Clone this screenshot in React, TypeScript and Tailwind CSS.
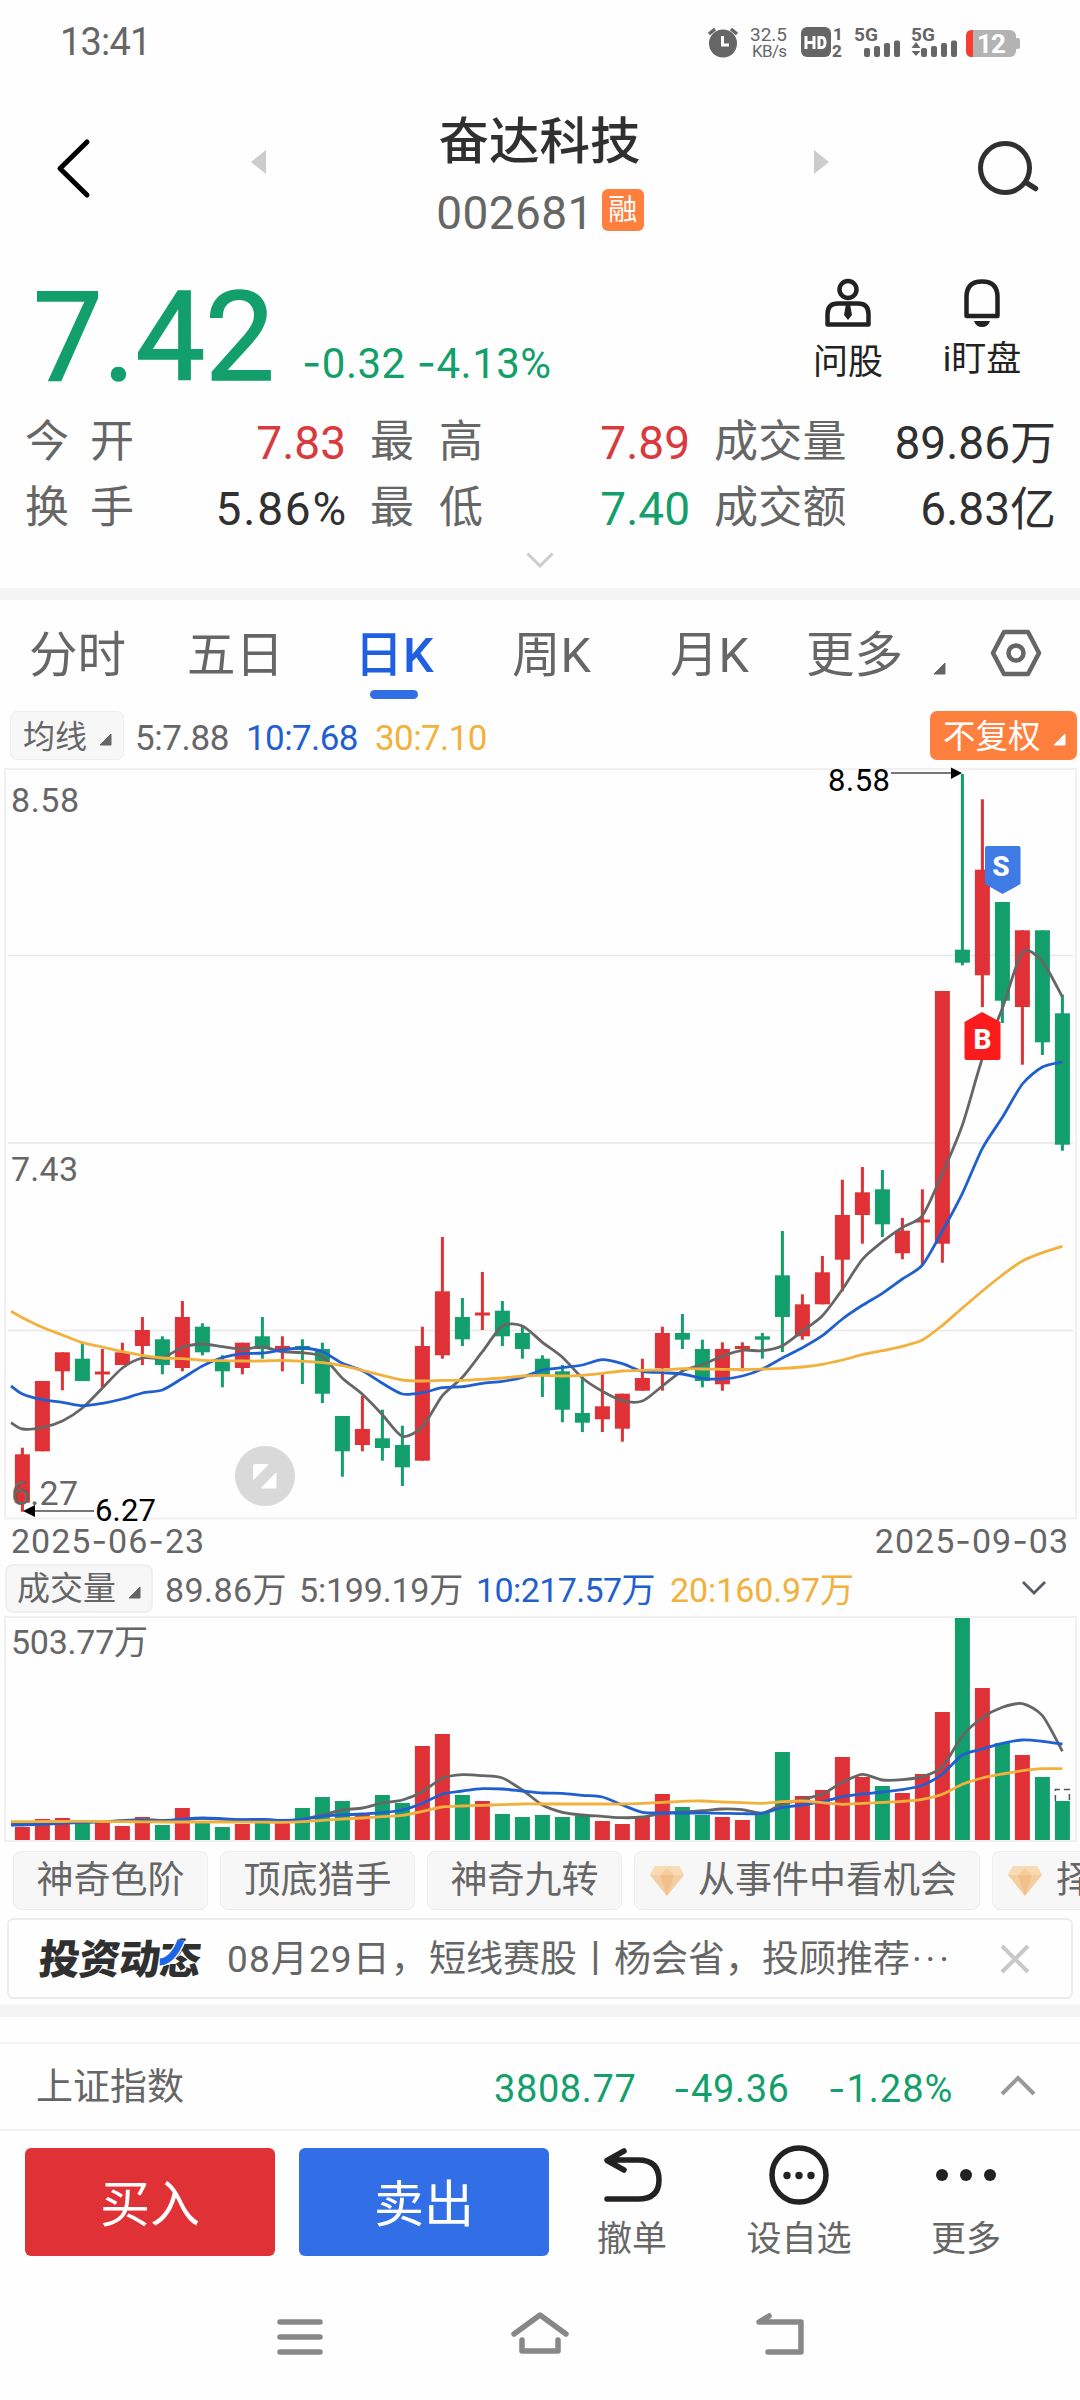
import React from 'react';

const RED = '#e03236';
const GREEN = '#139f6c';
const GRAY = '#666666';
const BLUE = '#1f5fd0';
const YELLOW = '#f2b13c';

// [color, high, body top, body bottom, low, volume top]
const candles: [string, number, number, number, number, number][] = [
  ['r', 1447.7, 1454.3, 1502.7, 1511.7, 1827],
  ['r', 1381, 1381, 1451.3, 1451.3, 1819],
  ['r', 1352.3, 1352.3, 1371.3, 1390.3, 1818],
  ['g', 1342.7, 1358.7, 1381, 1381, 1823],
  ['r', 1349, 1371.5, 1374.5, 1387.3, 1823],
  ['r', 1342.7, 1352.3, 1365, 1365, 1826],
  ['r', 1317, 1330, 1346, 1365, 1817],
  ['g', 1336.3, 1339.3, 1365, 1374.3, 1825],
  ['r', 1301, 1317, 1368, 1371.3, 1808],
  ['g', 1323.3, 1326.7, 1352.3, 1355.3, 1823],
  ['g', 1355.3, 1361, 1371.3, 1387.3, 1827],
  ['r', 1342.7, 1342.7, 1368, 1374.3, 1824],
  ['g', 1317, 1336.3, 1349, 1358.7, 1823],
  ['r', 1336.3, 1346, 1350, 1371.3, 1823],
  ['g', 1339.3, 1346, 1350, 1384, 1808],
  ['g', 1342.7, 1349, 1393.7, 1403, 1797],
  ['g', 1416, 1416, 1451.3, 1476.7, 1801],
  ['r', 1395.7, 1429, 1445, 1451.3, 1815],
  ['g', 1409.7, 1438.3, 1448, 1460.7, 1795],
  ['g', 1425.7, 1445, 1467.3, 1486, 1803],
  ['r', 1326.7, 1346, 1460.7, 1460.7, 1746],
  ['r', 1237, 1291.3, 1355.3, 1358.7, 1734],
  ['g', 1298, 1317, 1339.3, 1346, 1795],
  ['r', 1272, 1312.5, 1315.5, 1330, 1801],
  ['g', 1301, 1310.7, 1336.3, 1346, 1814],
  ['g', 1326.7, 1333, 1349, 1358.7, 1817],
  ['g', 1355.3, 1358.7, 1375, 1397, 1815],
  ['g', 1365, 1371.3, 1409.7, 1422.3, 1817],
  ['g', 1376.7, 1413, 1422.7, 1432, 1816],
  ['r', 1374.3, 1406.3, 1419.3, 1432, 1821],
  ['r', 1393.7, 1393.7, 1428.7, 1441.7, 1824],
  ['r', 1358.7, 1378, 1390.7, 1390.7, 1817],
  ['r', 1326.7, 1333, 1368.3, 1390.7, 1794],
  ['g', 1314, 1333, 1339.7, 1349, 1807],
  ['g', 1339.7, 1349, 1381, 1387.3, 1815],
  ['r', 1342.3, 1349, 1384.3, 1390.7, 1817],
  ['r', 1342.3, 1346, 1349, 1371.3, 1820],
  ['g', 1333, 1336.3, 1339.7, 1358.7, 1813],
  ['g', 1231, 1275.3, 1317, 1352, 1752],
  ['r', 1294.3, 1304.3, 1336.3, 1339.7, 1796],
  ['r', 1256, 1272.3, 1304.3, 1304.3, 1790],
  ['r', 1179.7, 1215, 1259.7, 1291.3, 1757],
  ['r', 1167, 1192.3, 1215, 1243.7, 1777],
  ['g', 1170, 1189.3, 1224.3, 1237, 1786],
  ['r', 1218, 1230.7, 1253.3, 1259.3, 1793],
  ['r', 1189.3, 1219.5, 1222.5, 1265, 1774],
  ['r', 991, 991, 1243.7, 1262.7, 1712],
  ['g', 774, 949.7, 962.7, 965.3, 1618],
  ['r', 799.3, 869.7, 975.3, 1007, 1688],
  ['g', 902, 902, 1000.7, 1023, 1743],
  ['r', 930.3, 930.3, 1007, 1064.7, 1755],
  ['g', 930.3, 930.3, 1042.3, 1055, 1777],
  ['g', 994.7, 1013.3, 1144.7, 1150.7, 1801],
];

// the first value of every series sits on the left edge, half a step before candle 0
const ma5 = [1422.7, 1429, 1427.5, 1421, 1408, 1388, 1368, 1358, 1358, 1347.3, 1344, 1346.7, 1349, 1347, 1351.7, 1352.7, 1356.7, 1378.3, 1394.3, 1414.7, 1436.3, 1426.7, 1395.7, 1377.3, 1351.7, 1326, 1326, 1342.3, 1357.3, 1378, 1391.3, 1400.7, 1401, 1386, 1371, 1364.7, 1356, 1350.3, 1350.7, 1345.7, 1331, 1315.7, 1289.3, 1259.3, 1241.7, 1227.3, 1215.7, 1173.3, 1125, 1058.3, 1008.3, 952.3, 961.7, 997];
const ma10 = [1386, 1394, 1399.7, 1402.3, 1405.7, 1403.3, 1399, 1393, 1390, 1378.3, 1366, 1357.7, 1353.7, 1353, 1350, 1348, 1351.7, 1363.3, 1370.7, 1383.3, 1394, 1392.7, 1387.7, 1386.7, 1383.3, 1381.3, 1377.3, 1370, 1367.7, 1365, 1359.7, 1363.7, 1371.3, 1372.7, 1374, 1378.3, 1379, 1376, 1369, 1358, 1347.7, 1335.7, 1319, 1305.3, 1293.3, 1279, 1265, 1231, 1193.3, 1148.3, 1117.3, 1084, 1067, 1062];
const ma30 = [1311.3, 1317.7, 1327.3, 1335, 1342.7, 1347, 1351.7, 1355.3, 1358, 1358.7, 1360.3, 1360.7, 1361, 1361, 1360.3, 1361.3, 1362.7, 1365.7, 1370.3, 1375.3, 1380, 1381, 1380.3, 1380.3, 1379.3, 1378, 1376, 1375.3, 1376, 1375.3, 1373.3, 1371, 1370.3, 1370, 1368.7, 1369, 1369.3, 1369.5, 1369, 1368.3, 1367, 1364.3, 1360, 1354.7, 1350.7, 1346.3, 1340, 1325.3, 1308, 1291, 1275, 1261, 1252.7, 1246.3];
const vol5 = [1824.3, 1824, 1823.3, 1822.7, 1822, 1821.7, 1820.7, 1819.3, 1820.3, 1819.7, 1818.3, 1819.3, 1820, 1819.5, 1820.7, 1819.3, 1815, 1810, 1808, 1803, 1800, 1791.7, 1778.3, 1774.7, 1775.7, 1778, 1790, 1805, 1812.3, 1815, 1816.3, 1817.7, 1817, 1813.3, 1812, 1810.7, 1809, 1809.7, 1813, 1804.3, 1799.3, 1794, 1782.3, 1774.3, 1780, 1779.7, 1776.7, 1766.7, 1736, 1717.7, 1707.3, 1703.7, 1715.7, 1751.3];
const vol10 = [1825, 1825, 1824.3, 1823.3, 1822.3, 1821.7, 1821, 1820.7, 1821, 1819.3, 1818, 1818.7, 1819.7, 1819.3, 1820.3, 1819.3, 1816.3, 1815, 1814, 1812.7, 1810, 1803.3, 1794, 1791, 1788.7, 1789, 1791, 1793, 1793.3, 1795.3, 1797, 1805, 1812.3, 1813, 1813, 1813, 1813.3, 1813.7, 1813.3, 1807.7, 1805, 1801.7, 1796.7, 1794, 1792, 1789.7, 1785.3, 1774, 1755, 1749, 1743.3, 1740, 1741.3, 1744];
const vol20 = [1821.5, 1821.7, 1821.5, 1821.5, 1821.3, 1821.5, 1821.7, 1821.8, 1822, 1822, 1822, 1822, 1822.2, 1822.2, 1822.3, 1821.7, 1820.3, 1819, 1818, 1816.7, 1815.3, 1811.3, 1807, 1806, 1805.3, 1804.7, 1804, 1804, 1804, 1804, 1804, 1804, 1803.3, 1802.3, 1801.3, 1801, 1802, 1802.7, 1803.3, 1801.7, 1801, 1802.7, 1804.3, 1803.3, 1802.3, 1801.3, 1799.3, 1794.3, 1784.3, 1778, 1774, 1770.7, 1768.7, 1768.7];

const cx = (i: number) => 22.4 + i * 20;

function linePath(values: number[]) {
  const pts = values.map((y, i) => [i === 0 ? 11 : cx(i - 1), y]);
  let d = `M${pts[0][0]} ${pts[0][1]}`;
  for (let i = 0; i < pts.length - 1; i++) {
    const p0 = pts[i - 1] || pts[i];
    const p1 = pts[i];
    const p2 = pts[i + 1];
    const p3 = pts[i + 2] || p2;
    const t = 0.13;
    d += `C${p1[0] + (p2[0] - p0[0]) * t} ${p1[1] + (p2[1] - p0[1]) * t} ${p2[0] - (p3[0] - p1[0]) * t} ${p2[1] - (p3[1] - p1[1]) * t} ${p2[0]} ${p2[1]}`;
  }
  return d;
}

const Line = ({ values, color }: { values: number[]; color: string }) => (
  <path d={linePath(values)} fill="none" stroke={color} strokeWidth="2.8" />
);

const Corner = ({ className = '' }) => (
  <svg viewBox="0 0 13 13" className={`w-[13px] h-[13px] shrink-0 ${className}`}>
    <path d="M12 1V12H1Z" fill="currentColor" stroke="currentColor" strokeLinejoin="round" />
  </svg>
);

// Roboto's hyphen is too short next to the digits, so it comes from Inter
const Num = ({ children }: { children: string }) => (
  <>
    {children.split(/(-)/).map((part, i) =>
      part === '-' ? <span key={i} className="font-[Inter]">-</span> : part
    )}
  </>
);

function StatusBar() {
  return (
    <div className="flex h-[84px] pl-[60px] pr-[60px] items-center justify-between text-[#666]">
      <span className="text-[38px] tracking-[-0.800px] leading-none">13:41</span>
      <svg width="316" height="40" viewBox="704 22 316 40" fill="#666" fontFamily="Roboto">
        {/* alarm */}
        <circle cx="723" cy="43.500" r="14" />
        <path d="M709 34L715 29M731 29L737 34" stroke="#666" strokeWidth="3.500" />
        <path d="M722.500 36V45H729" fill="none" stroke="#fff" strokeWidth="3" />
        <text x="750" y="41" fontSize="19" textLength="37">32.5</text>
        <text x="752" y="57" fontSize="17" textLength="35">KB/s</text>
        {/* HD */}
        <rect x="801" y="27" width="30" height="30" rx="6" />
        <path d="M806 36V49M814 36V49M806 42.500H814M819 37.500H822Q825 37.500 825 42.500Q825 47.500 822 47.500H819Z" fill="none" stroke="#fff" strokeWidth="3" />
        <text x="833" y="40" fontSize="17" fontWeight="800">1</text>
        <text x="832" y="57" fontSize="17" fontWeight="800">2</text>
        {[855, 912].map((x) => (
          <g key={x}>
            <text x={x - 1} y="41" fontSize="19" fontWeight="700" textLength="24">5G</text>
            <rect x={x + 9} y="48" width="6" height="9" rx="2" />
            <rect x={x + 19} y="46" width="6" height="11" rx="2" />
            <rect x={x + 29} y="43" width="6" height="14" rx="2" />
            <rect x={x + 39} y="40.500" width="6" height="16.500" rx="2" />
          </g>
        ))}
        <path d="M916 42L920.500 48H911.500ZM916 56L920.500 51H911.500Z" />
        {/* battery */}
        <rect x="966" y="30" width="50" height="27" rx="6" fill="#b3b3b3" />
        <rect x="1015" y="38" width="5" height="11" rx="2" fill="#b3b3b3" />
        <path d="M973 30H972Q966 30 966 36V51Q966 57 972 57H973Z" fill="#fb3c30" />
        <text x="977" y="53" fontSize="26" fontWeight="700" fill="#fff" textLength="29">12</text>
      </svg>
    </div>
  );
}

function Header() {
  return (
    <div className="flex h-[166px] items-start">
      <svg width="250" height="166" viewBox="0 84 250 166">
        <path d="M87 142L60 168.500L87 195" fill="none" stroke="#000" strokeWidth="5" strokeLinecap="round" strokeLinejoin="round" />
      </svg>
      <svg width="16" height="24" viewBox="0 0 16 24" className="mt-[66px]">
        <path d="M16 0V24L1 12Z" fill="#ccc" />
      </svg>
      <div className="flex flex-col items-center w-[548px] pt-[32px]">
        <h1 className="h-[52px] leading-[52px] text-[50.500px] font-medium text-[#303030] -ml-[1px]">奋达科技</h1>
        <div className="flex items-center h-[42px] mt-[21px]">
          <span className="text-[46px] leading-none tracking-[0.400px] text-[#666] mt-[6px]">002681</span>
          <span className="ml-[8px] w-[42px] h-[42px] rounded-[6px] bg-[#ff7f3f] text-white text-[29px] leading-[42px] text-center">融</span>
        </div>
      </div>
      <svg width="16" height="24" viewBox="0 0 16 24" className="mt-[66px]">
        <path d="M0 0V24L15 12Z" fill="#ccc" />
      </svg>
      <svg width="250" height="166" viewBox="830 84 250 166" fill="none" stroke="#303030">
        <circle cx="1005" cy="168" r="24.500" strokeWidth="5" />
        <path d="M1026 182.500L1035.500 188.500" strokeWidth="5.500" strokeLinecap="round" />
      </svg>
    </div>
  );
}

function Price() {
  return (
    <div className="flex h-[155px] text-[#139f6c]">
      <span className="ml-[33px] mt-[26px] w-[269px] text-[124px] leading-none [-webkit-text-stroke:1.500px_currentColor]">7.42</span>
      <span className="mt-[92px] text-[42px] leading-none tracking-[0.500px] w-[514px] whitespace-pre"><Num>-0.32 -4.13%</Num></span>
      <div className="flex flex-col items-center w-[64px] mt-[27px] text-[#222]">
        <svg width="48" height="52" viewBox="824 277 48 52" fill="none" stroke="#222" strokeWidth="4.500">
          <circle cx="848" cy="289.500" r="8.500" />
          <path d="M827.500 324.500V314Q827.500 303.500 838 303.500H858Q868.500 303.500 868.500 314V324.500Z" strokeLinejoin="round" />
          <path d="M846 304H850L852 315L848 320L844 315Z" fill="#222" stroke="none" />
        </svg>
        <span className="text-[35px] leading-[40px] mt-[14px] whitespace-nowrap">问股</span>
      </div>
      <div className="flex flex-col items-center w-[64px] ml-[70px] mt-[27px] text-[#222]">
        <svg width="48" height="52" viewBox="958 277 48 52">
          <path d="M966.500 316V297Q966.500 281.500 982 281.500Q997.500 281.500 997.500 297V316Z" fill="none" stroke="#222" strokeWidth="4.500" strokeLinejoin="round" />
          <path d="M974 321H990Q988 327 982 327Q976 327 974 321Z" fill="#222" />
        </svg>
        <span className="text-[35px] leading-[40px] mt-[11px] whitespace-nowrap">i盯盘</span>
      </div>
    </div>
  );
}

const stats = [
  { label: '今开', value: '7.83', color: 'text-[#d83a3d]', spaced: 'tracking-[21px]' },
  { label: '最高', value: '7.89', color: 'text-[#d83a3d]', spaced: 'tracking-[25px]' },
  { label: '成交量', value: '89.86万', color: 'text-[#303030]', spaced: 'tracking-[0.300px]' },
  { label: '换手', value: '5.86%', color: 'text-[#303030] tracking-[1.800px] -mr-[2px]', spaced: 'tracking-[21px]' },
  { label: '最低', value: '7.40', color: 'text-[#139f6c]', spaced: 'tracking-[25px]' },
  { label: '成交额', value: '6.83亿', color: 'text-[#303030]', spaced: 'tracking-[0.300px]' },
];

function Stats() {
  return (
    <div className="h-[183px] pt-[4px]">
      <div className="grid grid-cols-[321px_320px_342px] gap-x-[24px] pl-[25px]">
        {stats.map((s) => (
          <div key={s.label} className="flex justify-between items-center h-[66px]">
            <span className={`text-[44px] leading-[66px] text-[#666] ${s.spaced}`}>{s.label}</span>
            <span className={`text-[46px] leading-[66px] mt-[2px] ${s.color}`}>{s.value}</span>
          </div>
        ))}
      </div>
      <svg width="28" height="17" viewBox="0 0 28 17" className="mx-auto mt-[11px]">
        <path d="M1.500 1.500L14 14L26.500 1.500" fill="none" stroke="#ccc" strokeWidth="3" />
      </svg>
    </div>
  );
}

function Tabs() {
  return (
    <div className="flex h-[108px] text-[48.500px] text-[#666]">
      {['分时', '五日', '日K', '周K', '月K'].map((t) => (
        <div key={t} className="w-[158px] flex flex-col items-center">
          <span className={t === '日K' ? 'leading-[60px] mt-[26px] -ml-[2px] font-medium text-[#1f5fe0]' : 'leading-[60px] mt-[26px] -ml-[3px]'}>{t}</span>
          {t === '日K' && <i className="block w-[48px] h-[9px] rounded-full bg-[#326fe6] mt-[4px] -ml-[2px]" />}
        </div>
      ))}
      <span className="leading-[60px] mt-[26px] ml-[16px]">更多</span>
      <Corner className="ml-[30px] mt-[62px]" />
      <svg width="52" height="48" viewBox="0 0 52 48" fill="none" stroke="#666" strokeWidth="4.500" className="ml-[44px] mt-[29px]">
        <path d="M14 3H38L49 24L38 45H14L3 24Z" strokeLinejoin="round" />
        <circle cx="26" cy="24" r="7.500" />
      </svg>
    </div>
  );
}

function MaRow() {
  return (
    <div className="flex items-center h-[60px] pt-[3px] pb-[9px] pl-[10px] pr-[3px] text-[35px] leading-none">
      <div className="flex items-center w-[114px] h-[49px] rounded-[7px] border border-[#eee] bg-[#f7f7f7] text-[#666] text-[32px] pl-[12px]">
        <span className="leading-[46px] mt-[3px]">均线</span>
        <Corner className="ml-[12px] mt-[8px]" />
      </div>
      <span className="ml-[11px] mt-[6px] w-[111px] tracking-[-0.400px] text-[#666]">5:7.88</span>
      <span className="mt-[6px] w-[129px] tracking-[-0.600px] text-[#1f5fd0]">10:7.68</span>
      <span className="mt-[6px] tracking-[-0.600px] text-[#f2b13c]">30:7.10</span>
      <div className="flex items-center ml-auto w-[147px] h-[49px] rounded-[7px] bg-[#ff7f3f] text-white text-[32.500px] pl-[13px]">
        <span className="leading-[46px] mt-[3px]">不复权</span>
        <Corner className="ml-[12px] mt-[8px]" />
      </div>
    </div>
  );
}

function KChart() {
  return (
    <svg width="1080" height="752" viewBox="0 768 1080 752" className="block overflow-visible" fontFamily="Roboto">
      <rect x="5" y="769" width="1071" height="749.500" fill="none" stroke="#f0f0f0" strokeWidth="2" />
      <path d="M8 955.500H1073M8 1143H1073M8 1330.500H1073" stroke="#e8e8e8" strokeWidth="1.500" />
      {candles.map(([c, high, top, bottom, low], i) => (
        <g key={i} fill={c === 'r' ? RED : GREEN}>
          <rect x={cx(i) - 1.5} y={high} width="3" height={low - high} />
          <rect x={cx(i) - 7.5} y={top} width="15" height={bottom - top} />
        </g>
      ))}
      <Line values={ma5} color={GRAY} />
      <Line values={ma10} color={BLUE} />
      <Line values={ma30} color={YELLOW} />
      <g fill="#666" fontSize="34">
        <text x="11" y="812" textLength="68">8.58</text>
        <text x="11" y="1181" textLength="67">7.43</text>
        <text x="11" y="1505" textLength="67">6.27</text>
      </g>
      <text x="828" y="791" fontSize="31" textLength="62">8.58</text>
      <text x="95" y="1521" fontSize="31" textLength="61">6.27</text>
      <path d="M891 773H952M35 1511H94" stroke="#777" strokeWidth="2" />
      <path d="M951 767.500L962 773L951 779ZM35 1505V1517L23 1511Z" />
      {/* trade markers */}
      <path d="M987 846H1018.500Q1020.500 846 1020.500 848V884L1002.500 894L985 884V848Q985 846 987 846Z" fill="#3f7be4" />
      <text x="1001" y="876" fontSize="28" fontWeight="800" fill="#fff" textAnchor="middle">S</text>
      <path d="M982 1012L1000.500 1022V1058Q1000.500 1060 998.500 1060H966.500Q964.500 1060 964.500 1058V1022Z" fill="#fa1c1c" />
      <text x="982.500" y="1049" fontSize="28" fontWeight="800" fill="#fff" textAnchor="middle">B</text>
      {/* expand button */}
      <circle cx="265" cy="1476" r="30" fill="#d9d9d9" />
      <path d="M254 1464.500H268L253.500 1479.500V1465ZM276 1473V1488H261.500Z" fill="#fff" stroke="#fff" strokeLinejoin="round" />
    </svg>
  );
}

function VolumeChart() {
  const last = cx(52);
  return (
    <svg width="1080" height="228" viewBox="0 1616 1080 228" className="block" fontFamily='Roboto, "Noto Sans CJK SC"'>
      <rect x="5" y="1617" width="1071" height="224" fill="none" stroke="#f0f0f0" strokeWidth="2" />
      {candles.map((c, i) => (
        <rect key={i} x={cx(i) - 7.5} y={c[5]} width="15" height={1840 - c[5]} fill={c[0] === 'r' ? RED : GREEN} />
      ))}
      <path d={`M${last - 7} 1801V1789.500H${last + 7}V1801`} fill="none" stroke="#555" strokeWidth="1.500" strokeDasharray="6 4" />
      <Line values={vol5} color={GRAY} />
      <Line values={vol10} color={BLUE} />
      <Line values={vol20} color={YELLOW} />
      <text x="11" y="1654" fontSize="34" fill="#666" textLength="137">503.77万</text>
    </svg>
  );
}

function VolRow() {
  return (
    <div className="flex items-center h-[56px] pl-[5px] text-[34px] leading-none whitespace-nowrap">
      <div className="flex items-center w-[148px] h-[49px] rounded-[8px] border-2 border-[#f0f0f0] bg-[#f7f7f7] text-[#666] text-[33px] pl-[10px]">
        <span className="leading-[46px] mt-[2px]">成交量</span>
        <Corner className="ml-[12px] mt-[8px]" />
      </div>
      <span className="ml-[12px] mt-[3px] w-[134px] tracking-[0.400px] text-[#666]">89.86万</span>
      <span className="w-[177px] mt-[3px] tracking-[-0.200px] text-[#666]">5:199.19万</span>
      <span className="w-[194px] mt-[3px] tracking-[-0.600px] text-[#1f5fd0]">10:217.57万</span>
      <span className="mt-[3px] tracking-[-0.100px] text-[#f2b13c]">20:160.97万</span>
      <svg width="26" height="16" viewBox="0 0 26 16" className="ml-auto mr-[33px]">
        <path d="M2 2L13 13L24 2" fill="none" stroke="#555b66" strokeWidth="2.800" />
      </svg>
    </div>
  );
}

const Diamond = () => (
  <svg width="34" height="30" viewBox="0 0 34 30" className="shrink-0">
    <path d="M5 0H29L34 9L17 30L0 9Z" fill="#f4cda1" />
    <path d="M5 0H29L34 9H0Z" fill="#f8dab5" />
    <path d="M10 9H24L17 30Z" fill="#f1c08b" />
    <path d="M10 9L17 2L24 9Z" fill="#f5cd9f" />
  </svg>
);

function Chips() {
  return (
    <div className="flex gap-[12px] h-[72px] pt-[7px] pl-[13px] overflow-hidden text-[37px] text-[#666] whitespace-nowrap">
      {['神奇色阶', '顶底猎手', '神奇九转'].map((t) => (
        <div key={t} className="w-[195px] h-[59px] shrink-0 rounded-[8px] border border-[#ededed] bg-[#f7f7f7] text-center leading-[58px]">{t}</div>
      ))}
      {['从事件中看机会', '择时机会看'].map((t) => (
        <div key={t} className="flex items-center w-[346px] h-[59px] shrink-0 rounded-[8px] border border-[#ededed] bg-[#f7f7f7] pl-[15px] leading-[58px]">
          <Diamond />
          <span className="ml-[14px]">{t}</span>
        </div>
      ))}
    </div>
  );
}

function News() {
  return (
    <div className="flex items-center mt-[2px] mx-[7px] h-[81px] rounded-[6px] border-2 border-[#ececec] text-[37px] text-[#666] leading-[60px] whitespace-nowrap">
      <span className="relative ml-[30px] mt-[3px] w-[164px] -skew-x-6 text-[41px] font-black tracking-[-0.800px] text-[#303030]">
        投资动态
        <svg width="36" height="30" viewBox="0 0 36 30" className="absolute left-[119px] top-[8px]">
          <path d="M2 24Q15 23 21 2" fill="none" stroke="#fff" strokeWidth="10" />
          <path d="M2 24Q15 23 21 2" fill="none" stroke="#1f66e6" strokeWidth="7" />
        </svg>
      </span>
      <span className="ml-[24px] mt-[3px] w-[732px]">
        <span className="tracking-[1.100px]">08月29日，</span>
        短线赛股丨杨会省，投顾推荐
        <span className="tracking-[4px] ml-[2px]">···</span>
      </span>
      <svg width="32" height="32" viewBox="0 0 32 32" className="ml-[40px]">
        <path d="M3 3L29 29M29 3L3 29" stroke="#c8c8c8" strokeWidth="4" />
      </svg>
    </div>
  );
}

function IndexRow() {
  return (
    <div className="flex items-center h-[89px] border-y-2 border-[#f2f2f2] text-[38px] leading-none text-[#139f6c]">
      <span className="ml-[36px] w-[458px] text-[37px] leading-[60px] mt-[2px] text-[#666]">上证指数</span>
      <span className="w-[179px] mt-[4px] tracking-[0.600px]">3808.77</span>
      <span className="w-[155px] mt-[4px] tracking-[0.600px]"><Num>-49.36</Num></span>
      <span className="w-[172px] mt-[4px] tracking-[1px]"><Num>-1.28%</Num></span>
      <svg width="36" height="21" viewBox="0 0 36 21" className="mb-[3px]">
        <path d="M2 19L18 3L34 19" fill="none" stroke="#999" strokeWidth="4" />
      </svg>
    </div>
  );
}

function Actions() {
  return (
    <div className="flex h-[145px] pt-[17px] pl-[25px] text-[35px] text-[#666]">
      <button className="w-[250px] h-[108px] pt-[6px] rounded-[6px] bg-[#e03236] text-white text-[50px] leading-none">买入</button>
      <button className="ml-[24px] w-[250px] h-[108px] pt-[6px] rounded-[6px] bg-[#326fe6] text-white text-[50px] leading-none">卖出</button>
      <div className="flex flex-col items-center w-[100px] ml-[33px] -mt-[5px]">
        <svg width="64" height="64" viewBox="600 2143 64 64" fill="none" stroke="#222" strokeWidth="5.500" strokeLinecap="round" strokeLinejoin="round">
          <path d="M624 2151L607 2160.500L624 2170M608 2160H638Q659 2160 659 2180Q659 2199 638 2199H607" />
        </svg>
        <span className="leading-[40px] mt-[13px]">撤单</span>
      </div>
      <div className="flex flex-col items-center w-[120px] ml-[57px] -mt-[5px]">
        <svg width="64" height="64" viewBox="0 0 64 64">
          <circle cx="32" cy="32" r="27" fill="none" stroke="#222" strokeWidth="5.500" />
          <circle cx="20" cy="32.500" r="3.700" fill="#222" />
          <circle cx="32" cy="32.500" r="3.700" fill="#222" />
          <circle cx="44" cy="32.500" r="3.700" fill="#222" />
        </svg>
        <span className="leading-[40px] mt-[13px]">设自选</span>
      </div>
      <div className="flex flex-col items-center w-[100px] ml-[57px] -mt-[5px]">
        <svg width="64" height="64" viewBox="0 0 64 64" fill="#222">
          <circle cx="8" cy="32" r="6" />
          <circle cx="32" cy="32" r="6" />
          <circle cx="56" cy="32" r="6" />
        </svg>
        <span className="leading-[40px] mt-[13px]">更多</span>
      </div>
    </div>
  );
}

function NavBar() {
  return (
    <div className="flex h-[124px] pt-[30px] pl-[270px] gap-[180px]">
      <svg width="60" height="60" viewBox="270 2306 60 60" stroke="#888" strokeWidth="5.500" strokeLinecap="round">
        <path d="M280 2322H320M280 2337H320M280 2352H320" />
      </svg>
      <svg width="60" height="60" viewBox="510 2306 60 60" fill="none" stroke="#888" strokeWidth="5.500" strokeLinecap="round" strokeLinejoin="round">
        <path d="M514 2334L540 2315L566 2334M522 2340V2351H558V2340" />
      </svg>
      <svg width="60" height="60" viewBox="750 2306 60 60" fill="none" stroke="#888" strokeWidth="5.500" strokeLinecap="round" strokeLinejoin="round">
        <path d="M769 2316L759 2322H801V2352H768" />
      </svg>
    </div>
  );
}

export default function App() {
  return (
    <div className="w-[1080px] h-[2400px] overflow-hidden bg-[#fefefe] font-[Roboto,'Noto_Sans_CJK_SC',sans-serif]">
      <StatusBar />
      <Header />
      <Price />
      <Stats />
      <div className="h-[12px] bg-[#f4f4f4]" />
      <Tabs />
      <MaRow />
      <KChart />
      <div className="flex justify-between items-center h-[40px] pl-[11px] pr-[11px] text-[34px] leading-none tracking-[1px] text-[#666]">
        <span className="mt-[1px]"><Num>2025-06-23</Num></span>
        <span className="mt-[1px]"><Num>2025-09-03</Num></span>
      </div>
      <VolRow />
      <VolumeChart />
      <Chips />
      <News />
      <div className="mt-[6px] h-[12px] bg-[#f4f4f4]" />
      <div className="h-[25px]" />
      <IndexRow />
      <Actions />
      <NavBar />
    </div>
  );
}
